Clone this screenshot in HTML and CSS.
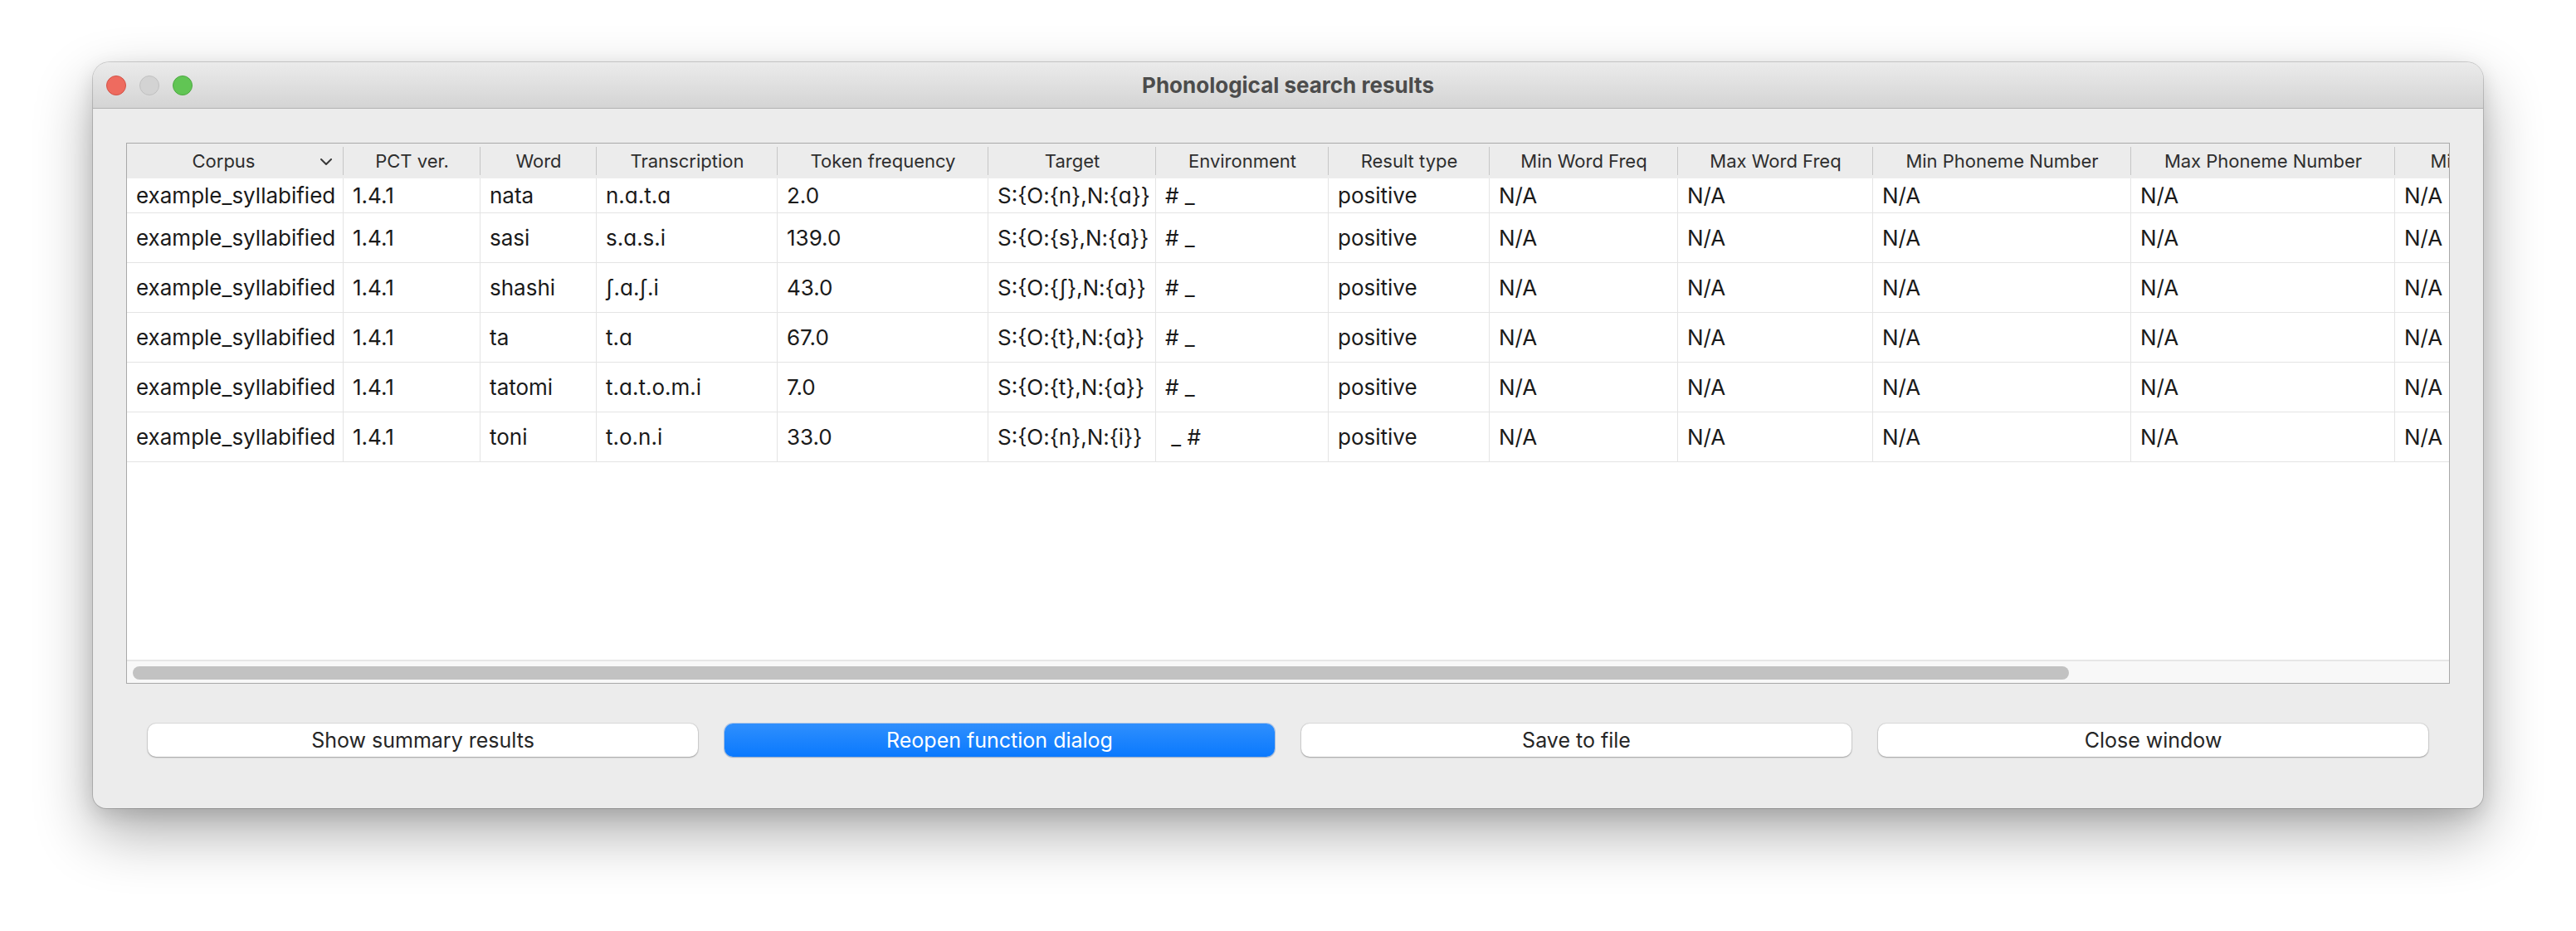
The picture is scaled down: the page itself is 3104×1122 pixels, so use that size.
FILE: index.html
```html
<!DOCTYPE html>
<html>
<head>
<meta charset="utf-8">
<title>Phonological search results</title>
<link rel="stylesheet" href="styles.css">
</head>
<body>
<div class="page">
  <div class="window">
    <div class="titlebar">
      <div class="lights">
        <span class="light red"></span>
        <span class="light gray"></span>
        <span class="light green"></span>
      </div>
      <div class="title">Phonological search results</div>
      <div></div>
    </div>
    <div class="content">
      <div class="tableframe">
        <div class="viewport">
          <div class="grid">
            <div class="hcell sort">Corpus<svg class="chev" width="14" height="8" viewBox="0 0 14 8"><polyline points="1,1 7,7 13,1" fill="none" stroke="#3a3a3a" stroke-width="2" stroke-linecap="round" stroke-linejoin="round"/></svg></div>
            <div class="hcell">PCT ver.</div>
            <div class="hcell">Word</div>
            <div class="hcell">Transcription</div>
            <div class="hcell">Token frequency</div>
            <div class="hcell">Target</div>
            <div class="hcell">Environment</div>
            <div class="hcell">Result type</div>
            <div class="hcell">Min Word Freq</div>
            <div class="hcell">Max Word Freq</div>
            <div class="hcell">Min Phoneme Number</div>
            <div class="hcell">Max Phoneme Number</div>
            <div class="hcell">Min Syllable Number</div>

            <div class="cell">example_syllabified</div><div class="cell">1.4.1</div><div class="cell">nata</div><div class="cell">n.ɑ.t.ɑ</div><div class="cell">2.0</div><div class="cell">S:{O:{n},N:{ɑ}}</div><div class="cell">#&nbsp;_</div><div class="cell">positive</div><div class="cell">N/A</div><div class="cell">N/A</div><div class="cell">N/A</div><div class="cell">N/A</div><div class="cell">N/A</div>

            <div class="cell">example_syllabified</div><div class="cell">1.4.1</div><div class="cell">sasi</div><div class="cell">s.ɑ.s.i</div><div class="cell">139.0</div><div class="cell">S:{O:{s},N:{ɑ}}</div><div class="cell">#&nbsp;_</div><div class="cell">positive</div><div class="cell">N/A</div><div class="cell">N/A</div><div class="cell">N/A</div><div class="cell">N/A</div><div class="cell">N/A</div>

            <div class="cell">example_syllabified</div><div class="cell">1.4.1</div><div class="cell">shashi</div><div class="cell">ʃ.ɑ.ʃ.i</div><div class="cell">43.0</div><div class="cell">S:{O:{ʃ},N:{ɑ}}</div><div class="cell">#&nbsp;_</div><div class="cell">positive</div><div class="cell">N/A</div><div class="cell">N/A</div><div class="cell">N/A</div><div class="cell">N/A</div><div class="cell">N/A</div>

            <div class="cell">example_syllabified</div><div class="cell">1.4.1</div><div class="cell">ta</div><div class="cell">t.ɑ</div><div class="cell">67.0</div><div class="cell">S:{O:{t},N:{ɑ}}</div><div class="cell">#&nbsp;_</div><div class="cell">positive</div><div class="cell">N/A</div><div class="cell">N/A</div><div class="cell">N/A</div><div class="cell">N/A</div><div class="cell">N/A</div>

            <div class="cell">example_syllabified</div><div class="cell">1.4.1</div><div class="cell">tatomi</div><div class="cell">t.ɑ.t.o.m.i</div><div class="cell">7.0</div><div class="cell">S:{O:{t},N:{ɑ}}</div><div class="cell">#&nbsp;_</div><div class="cell">positive</div><div class="cell">N/A</div><div class="cell">N/A</div><div class="cell">N/A</div><div class="cell">N/A</div><div class="cell">N/A</div>

            <div class="cell">example_syllabified</div><div class="cell">1.4.1</div><div class="cell">toni</div><div class="cell">t.o.n.i</div><div class="cell">33.0</div><div class="cell">S:{O:{n},N:{i}}</div><div class="cell">&nbsp;_&nbsp;#</div><div class="cell">positive</div><div class="cell">N/A</div><div class="cell">N/A</div><div class="cell">N/A</div><div class="cell">N/A</div><div class="cell">N/A</div>
          </div>
        </div>
        <div class="hscroll"><div class="thumb"></div></div>
      </div>
      <div class="buttons">
        <button class="btn">Show summary results</button>
        <button class="btn primary">Reopen function dialog</button>
        <button class="btn">Save to file</button>
        <button class="btn">Close window</button>
      </div>
    </div>
  </div>
</div>
</body>
</html>
```

FILE: styles.css
```css
html, body {
  margin: 0;
  padding: 0;
  background: #ffffff;
}

body {
  font-family: "Inter", "Liberation Sans", "DejaVu Sans", sans-serif;
  color: #1d1d1d;
}

.page {
  padding: 75px 0 0 112px;
  height: 1122px;
  box-sizing: border-box;
  overflow: hidden;
}

.window {
  width: 2880px;
  height: 899px;
  background: #ececec;
  border-radius: 20px 20px 16px 16px;
  box-shadow: 0 0 0 1px rgba(0, 0, 0, 0.16),
              0 30px 70px rgba(0, 0, 0, 0.32),
              0 8px 24px rgba(0, 0, 0, 0.12);
  overflow: hidden;
  display: flex;
  flex-direction: column;
}

.titlebar {
  height: 56px;
  box-sizing: border-box;
  border-bottom: 1px solid #b2b2b2;
  background: linear-gradient(#ebebeb, #d4d4d4);
  display: grid;
  grid-template-columns: 1fr auto 1fr;
  align-items: center;
}

.lights {
  display: flex;
  gap: 16px;
  padding-left: 16px;
}

.light {
  width: 24px;
  height: 24px;
  border-radius: 50%;
  box-sizing: border-box;
}

.light.red { background: #ee6b5f; border: 1px solid #d25347; }
.light.gray { background: #d3d3d3; border: 1px solid #c0c0c0; }
.light.green { background: #61c554; border: 1px solid #4ea843; }

.title {
  font-size: 26px;
  font-weight: 700;
  color: #4c4c4c;
}

.content {
  flex: 1;
  display: flex;
  flex-direction: column;
  padding: 41px 40px 0 40px;
}

.tableframe {
  height: 652px;
  box-sizing: border-box;
  border: 1px solid #a9a9a9;
  background: #ffffff;
  display: flex;
  flex-direction: column;
  overflow: hidden;
}

.viewport {
  flex: 1;
  overflow: hidden;
}

.grid {
  display: grid;
  width: max-content;
  grid-template-columns: 261px 165px 140px 218px 254px 202px 208px 194px 227px 235px 311px 318px 300px;
  grid-template-rows: 42px 42px repeat(5, 60px);
}

.hcell {
  position: relative;
  background: #ececec;
  font-size: 22px;
  color: #2e2e2e;
  display: flex;
  align-items: center;
  justify-content: center;
  white-space: nowrap;
}

.hcell::after {
  content: "";
  position: absolute;
  right: -1px;
  top: 4px;
  bottom: 4px;
  width: 2px;
  background: #c6c6c6;
}

.hcell.sort {
  padding-right: 28px;
}

.chev {
  position: absolute;
  right: 14px;
  top: 18px;
}

.cell {
  box-sizing: border-box;
  border-right: 1px solid #e4e4e4;
  border-bottom: 1px solid #e4e4e4;
  padding-left: 11px;
  font-size: 26px;
  color: #1a1a1a;
  display: flex;
  align-items: center;
  white-space: pre;
}

.hscroll {
  height: 28px;
  box-sizing: border-box;
  border-top: 2px solid #e6e6e6;
  background: #f8f8f8;
  padding: 6px 0 0 7px;
}

.thumb {
  width: 2333px;
  height: 16px;
  border-radius: 8px;
  background: #c2c2c2;
}

.buttons {
  display: flex;
  gap: 32px;
  padding: 0 26px;
  margin-top: 48px;
}

.btn {
  flex: 1;
  height: 40px;
  border: none;
  border-radius: 10px;
  background: #ffffff;
  box-shadow: 0 0 0 1px rgba(0, 0, 0, 0.07), 0 1px 2px rgba(0, 0, 0, 0.28);
  font-family: "Inter", "Liberation Sans", sans-serif;
  font-size: 25px;
  color: #262626;
  padding: 0;
}

.btn.primary {
  background: linear-gradient(#2f8ffd, #0a79fe);
  color: #ffffff;
  box-shadow: 0 0 0 1px rgba(0, 90, 220, 0.25), 0 1px 2px rgba(0, 0, 0, 0.2);
}
```
